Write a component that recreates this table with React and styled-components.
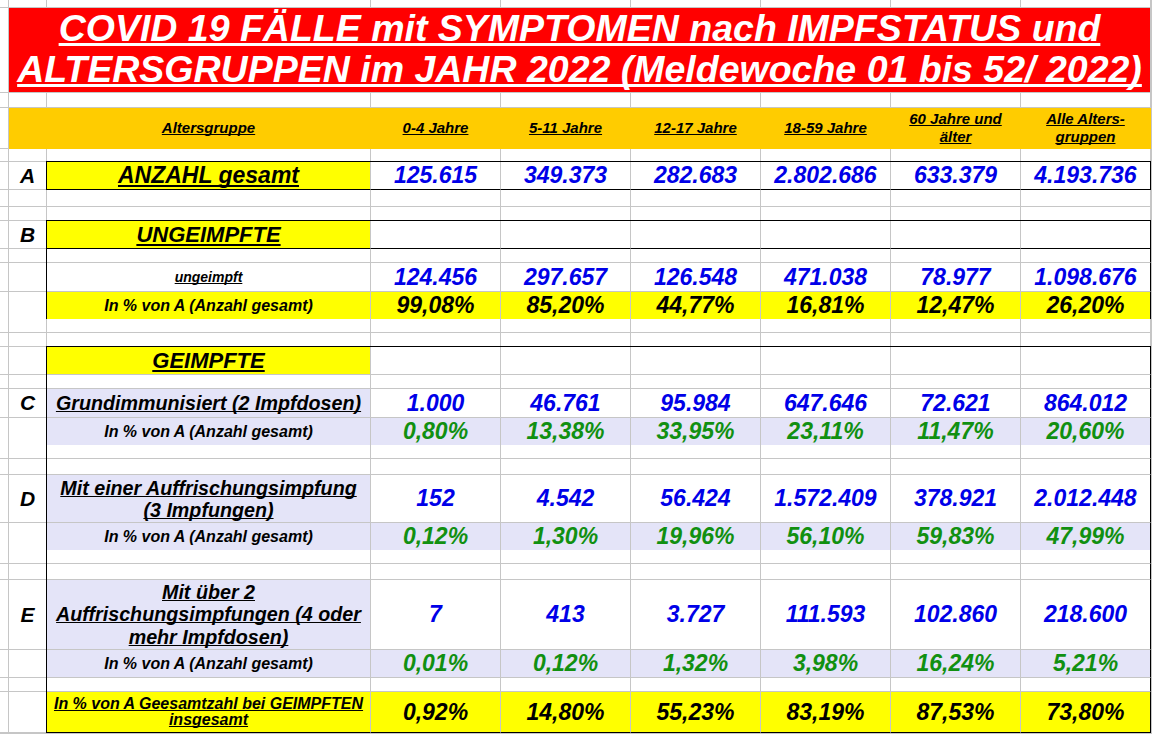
import React from 'react';
import styled, { createGlobalStyle } from 'styled-components';

const GRID = '#c6c6c6';
const RED = '#ff0000';
const ORANGE = '#ffcc00';
const YELLOW = '#ffff00';
const LAVENDER = '#e4e4f8';
const BLUE = '#0000e8';
const GREEN = '#119011';

const GlobalStyle = createGlobalStyle`
  html, body {
    margin: 0;
    padding: 0;
    background: #fff;
  }
  body {
    font-family: "Liberation Sans", Arial, sans-serif;
    overflow: hidden;
  }
`;

const Sheet = styled.div`
  width: 1152px;
  height: 734px;
  display: flex;
  flex-direction: column;
  overflow: hidden;
  background: #fff;
`;

const Row = styled.div`
  display: grid;
  grid-template-columns: 9px 38px 324px repeat(6, 130px) 1fr;
  height: ${p => (p.$h ? `${p.$h}px` : 'auto')};
  flex: ${p => (p.$h ? '0 0 auto' : '1 1 auto')};
`;

// black frame edges: top/left are drawn over the neighbour's grid line
const edgeShadow = ({ $t, $l }) => {
  const s = [];
  if ($t) s.push('0 -1px 0 #000');
  if ($l) s.push('-1px 0 0 #000');
  if ($t && $l) s.push('-1px -1px 0 #000');
  return s.length ? s.join(', ') : 'none';
};

const Cell = styled.div`
  box-sizing: border-box;
  min-width: 0;
  grid-column: span ${p => p.$span || 1};
  display: flex;
  flex-direction: column;
  align-items: center;
  justify-content: center;
  text-align: center;
  background: ${p => p.$bg || '#fff'};
  border-right: 1px solid ${p => (p.$r ? '#000' : p.$line || GRID)};
  border-bottom: 1px solid ${p => (p.$b ? '#000' : p.$line || GRID)};
  box-shadow: ${edgeShadow};
  white-space: nowrap;
`;

const TitleText = styled.div`
  color: #fff;
  font-size: 37.5px;
  line-height: 41px;
  font-weight: bold;
  font-style: italic;
  text-decoration: underline;
  text-decoration-skip-ink: none;
  white-space: pre;
  margin-top: -2px;
`;

const HeaderText = styled.span`
  font-size: 15px;
  line-height: 18px;
  font-weight: bold;
  font-style: italic;
  text-decoration: underline;
  text-decoration-skip-ink: none;
  color: #000;
  white-space: pre;
`;

const Letter = styled.span`
  font-size: 21px;
  font-weight: bold;
  font-style: italic;
  color: #000;
`;

const Label = styled.span`
  font-size: ${p => p.$size}px;
  line-height: ${p => (p.$lh ? `${p.$lh}px` : 'normal')};
  font-weight: bold;
  font-style: italic;
  color: #000;
  text-decoration: ${p => (p.$plain ? 'none' : 'underline')};
  text-decoration-skip-ink: none;
  white-space: pre;
`;

const Num = styled.span`
  font-size: 23px;
  font-weight: bold;
  font-style: italic;
  color: ${p => p.$color};
`;

const AGES = ['0-4 Jahre', '5-11 Jahre', '12-17 Jahre', '18-59 Jahre', '60 Jahre und\nälter', 'Alle Alters-\ngruppen'];

const pct = (values) => ({
  h: 27,
  label: 'In % von A (Anzahl gesamt)',
  size: 16,
  plain: true,
  labelBg: LAVENDER,
  valueBg: LAVENDER,
  values,
  color: GREEN,
  side: true,
});

const rows = [
  { h: 8 },
  { h: 85, kind: 'title' },
  { h: 15 },
  { h: 41, kind: 'header' },
  { h: 13 },
  {
    h: 28, letter: 'A', label: 'ANZAHL gesamt', size: 23, labelBg: YELLOW,
    values: ['125.615', '349.373', '282.683', '2.802.686', '633.379', '4.193.736'],
    color: BLUE, t: true, b: true, side: true,
  },
  { h: 17 },
  { h: 14 },
  { h: 28, letter: 'B', label: 'UNGEIMPFTE', size: 22, labelBg: YELLOW, t: true, b: true, side: true },
  { h: 14, side: true },
  {
    h: 29, label: 'ungeimpft', size: 14,
    values: ['124.456', '297.657', '126.548', '471.038', '78.977', '1.098.676'],
    color: BLUE, side: true,
  },
  {
    h: 27, label: 'In % von A (Anzahl gesamt)', size: 16, plain: true, labelBg: YELLOW, valueBg: YELLOW,
    values: ['99,08%', '85,20%', '44,77%', '16,81%', '12,47%', '26,20%'],
    color: '#000', side: true, b: true,
  },
  { h: 14 },
  { h: 14 },
  { h: 28, label: 'GEIMPFTE', size: 22, labelBg: YELLOW, t: true, side: true },
  { h: 14, side: true },
  {
    h: 29, letter: 'C', label: 'Grundimmunisiert (2 Impfdosen)', size: 19.7, labelBg: LAVENDER,
    values: ['1.000', '46.761', '95.984', '647.646', '72.621', '864.012'],
    color: BLUE, side: true,
  },
  pct(['0,80%', '13,38%', '33,95%', '23,11%', '11,47%', '20,60%']),
  { h: 14, side: true },
  { h: 16, side: true },
  {
    h: 48, letter: 'D', label: 'Mit einer Auffrischungsimpfung\n(3 Impfungen)', size: 19.7, lh: 22, labelBg: LAVENDER,
    values: ['152', '4.542', '56.424', '1.572.409', '378.921', '2.012.448'],
    color: BLUE, side: true,
  },
  pct(['0,12%', '1,30%', '19,96%', '56,10%', '59,83%', '47,99%']),
  { h: 14, side: true },
  { h: 16, side: true },
  {
    h: 70, letter: 'E', label: 'Mit über 2\nAuffrischungsimpfungen (4 oder\nmehr Impfdosen)', size: 19.7, lh: 22.5,
    labelBg: LAVENDER,
    values: ['7', '413', '3.727', '111.593', '102.860', '218.600'],
    color: BLUE, side: true,
  },
  { ...pct(['0,01%', '0,12%', '1,32%', '3,98%', '16,24%', '5,21%']), h: 28 },
  { h: 14, side: true },
  {
    h: 41, label: 'In % von A Geesamtzahl bei GEIMPFTEN\ninsgesamt', size: 16, lh: 16, labelBg: YELLOW, valueBg: YELLOW,
    values: ['0,92%', '14,80%', '55,23%', '83,19%', '87,53%', '73,80%'],
    color: '#000', side: true, b: true,
  },
  { h: 0 },
];

function SheetRow({ row }) {
  if (row.kind === 'title') {
    return (
      <Row $h={row.h}>
        <Cell />
        <Cell $span={8} $bg={RED}>
          <TitleText>{'COVID 19 FÄLLE mit SYMPTOMEN nach IMPFSTATUS und\nALTERSGRUPPEN im JAHR 2022 (Meldewoche 01 bis 52/ 2022)'}</TitleText>
        </Cell>
        <Cell />
      </Row>
    );
  }

  if (row.kind === 'header') {
    return (
      <Row $h={row.h}>
        <Cell />
        <Cell $bg={ORANGE} $line={ORANGE} />
        <Cell $bg={ORANGE} $line={ORANGE}>
          <HeaderText>Altersgruppe</HeaderText>
        </Cell>
        {AGES.map(age => (
          <Cell key={age} $bg={ORANGE} $line={ORANGE}>
            <HeaderText>{age}</HeaderText>
          </Cell>
        ))}
        <Cell />
      </Row>
    );
  }

  const values = row.values || ['', '', '', '', '', ''];

  return (
    <Row $h={row.h}>
      <Cell />
      <Cell>{row.letter && <Letter>{row.letter}</Letter>}</Cell>
      <Cell $bg={row.labelBg} $t={row.t} $b={row.b} $l={row.side}>
        {row.label && (
          <Label $size={row.size} $lh={row.lh} $plain={row.plain}>{row.label}</Label>
        )}
      </Cell>
      {values.map((v, i) => (
        <Cell key={i} $bg={row.valueBg} $t={row.t} $b={row.b} $r={row.side && i === 5}>
          {v && <Num $color={row.color}>{v}</Num>}
        </Cell>
      ))}
      <Cell />
    </Row>
  );
}

export default function App() {
  return (
    <>
      <GlobalStyle />
      <Sheet>
        {rows.map((row, i) => (
          <SheetRow key={i} row={row} />
        ))}
      </Sheet>
    </>
  );
}
